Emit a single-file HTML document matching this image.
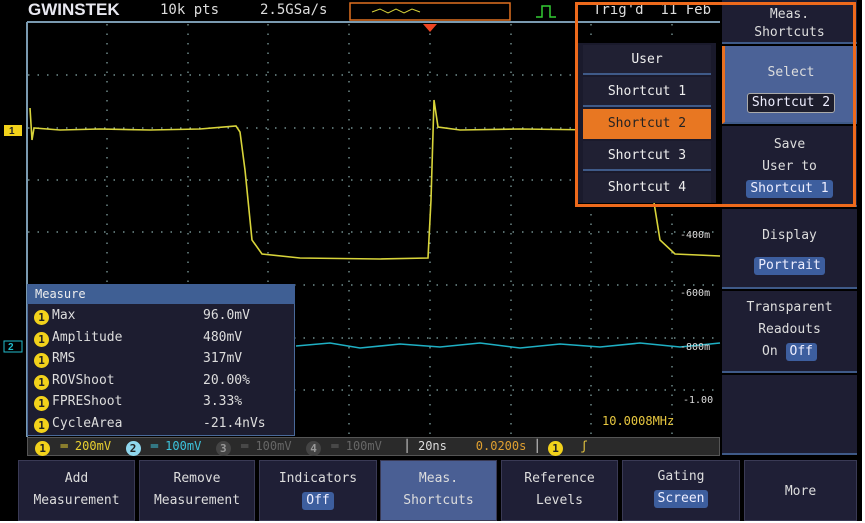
<!DOCTYPE html>
<html><head><meta charset="utf-8"><style>
*{margin:0;padding:0;box-sizing:border-box}
body{width:865px;height:523px;background:#fff;overflow:hidden;position:relative;font-family:"DejaVu Sans Mono","Liberation Mono",monospace;color:#e6e6ea}
.a{position:absolute}
.scr{left:0;top:0;width:862px;height:521px;background:#000}
.btn{position:absolute;background:#1f1f36;border:1px solid #3a3a55;text-align:center;font-size:13px;line-height:22px;color:#ddd}
.pill{display:inline-block;background:#3d5e9e;color:#eef;padding:0 4px;line-height:18px;border-radius:3px}
.rp{position:absolute;left:722px;width:135px;background:#1e1e33;border-bottom:2px solid #3f5a88;text-align:center;font-size:13px;line-height:22px;color:#ddd}
.li{position:absolute;left:583px;width:128px;height:30px;text-align:center;font-size:13px;line-height:30px;color:#eee;background:#202033;border-bottom:2px solid #3f5a88}
.m{position:absolute;left:34px;font-size:13px;line-height:21.5px;color:#ddd}
.c{display:inline-block;width:15px;height:15px;border-radius:50%;background:#f2d21b;color:#222;font-size:11px;line-height:15px;text-align:center;font-weight:bold;vertical-align:-2px;margin-right:3px}
</style></head><body>
<div class="a scr"></div>
<svg class="a" style="left:0;top:0" width="865" height="523">
<g stroke="#8aa" stroke-width="1.2" stroke-dasharray="1.5 8">
<line x1="107" y1="24" x2="107" y2="436"/><line x1="188" y1="24" x2="188" y2="436"/><line x1="268" y1="24" x2="268" y2="436"/><line x1="349" y1="24" x2="349" y2="436"/><line x1="430" y1="24" x2="430" y2="436"/><line x1="511" y1="24" x2="511" y2="436"/><line x1="591" y1="24" x2="591" y2="436"/><line x1="672" y1="24" x2="672" y2="436"/>
<line x1="28" y1="75" x2="720" y2="75"/><line x1="28" y1="128" x2="720" y2="128"/><line x1="28" y1="180" x2="720" y2="180"/><line x1="28" y1="232" x2="720" y2="232"/><line x1="28" y1="285" x2="720" y2="285"/><line x1="28" y1="338" x2="720" y2="338"/><line x1="28" y1="390" x2="720" y2="390"/>
</g>
<line x1="27" y1="22" x2="720" y2="22" stroke="#7a9ab0" stroke-width="2"/>
<line x1="27" y1="22" x2="27" y2="437" stroke="#7a9ab0" stroke-width="2"/>
<polyline fill="none" stroke="#d8d43a" stroke-width="1.6" points="30,108 32,140 34,128 60,130 100,129 150,130 200,129 236,126 240,132 245,170 252,240 262,254 300,258 380,259 428,258 431,200 434,100 438,127 460,130 520,129 600,130 648,129 652,190 660,240 675,254 720,256"/>
<polyline fill="none" stroke="#1fb0c4" stroke-width="1.6" points="296,346 330,343 360,348 400,344 440,347 480,343 520,348 560,344 600,347 640,343 680,347 720,343"/>
<polygon points="423,24 437,24 430,32" fill="#ee4422"/>
<rect x="4" y="125" width="18" height="11" fill="#f2d21b"/><text x="9" y="134" font-size="10" font-weight="bold" fill="#222" font-family="Liberation Sans">1</text>
<rect x="4" y="341" width="18" height="11" fill="none" stroke="#2bc" /><text x="8" y="350" font-size="10" font-weight="bold" fill="#2bc" font-family="Liberation Sans">2</text>
<rect x="350" y="3" width="160" height="17" fill="none" stroke="#e07020" stroke-width="1.5"/>
<polyline fill="none" stroke="#d8d43a" points="372,12 380,9 388,13 396,9 404,13 412,9 420,12"/>
<path d="M536 17 H542 V6 H550 V17 H556" fill="none" stroke="#3c3" stroke-width="1.5"/>
</svg>
<div class="a" style="left:28px;top:0;font:bold 17px 'Liberation Sans',sans-serif;color:#e8e8f0;letter-spacing:0px">GWINSTEK</div>
<div class="a" style="left:160px;top:2px;font-size:14px;color:#ddd">10k pts</div>
<div class="a" style="left:260px;top:2px;font-size:14px;color:#ddd">2.5GSa/s</div>
<div class="a" style="left:593px;top:2px;font-size:14px;color:#ddd">Trig'd &nbsp;11 Feb</div>
<div class="a" style="left:680px;top:230px;font-size:10px;color:#ddd">-400m</div>
<div class="a" style="left:680px;top:288px;font-size:10px;color:#ddd">-600m</div>
<div class="a" style="left:680px;top:342px;font-size:10px;color:#ddd">-800m</div>
<div class="a" style="left:683px;top:395px;font-size:10px;color:#ddd">-1.00</div>
<div class="a" style="left:602px;top:414px;font-size:12px;color:#e8c840">10.0008MHz</div>
<!-- measure -->
<div class="a" style="left:27px;top:284px;width:268px;height:152px;background:#1d1d30;border:1px solid #4a6a9a"></div>
<div class="a" style="left:27px;top:284px;width:268px;height:20px;background:#3f5f94;font-size:12px;line-height:20px;padding-left:8px;color:#eee">Measure</div>
<div class="m" style="top:305px"><span class="c">1</span>Max<br><span class="c">1</span>Amplitude<br><span class="c">1</span>RMS<br><span class="c">1</span>ROVShoot<br><span class="c">1</span>FPREShoot<br><span class="c">1</span>CycleArea</div>
<div class="m" style="left:203px;top:305px">96.0mV<br>480mV<br>317mV<br>20.00%<br>3.33%<br>-21.4nVs</div>
<!-- status bar -->
<div class="a" style="left:27px;top:437px;width:693px;height:19px;background:#2a2a2a;border:1px solid #555;font-size:12px;line-height:17px;white-space:pre;color:#ddd"> <span class="c">1</span> <span style="color:#e8d030">═ 200mV</span>  <span class="c" style="background:#8fd8ee">2</span> <span style="color:#3cc4dc">═ 100mV</span>  <span class="c" style="background:#444;color:#999">3</span> <span style="color:#666">═ 100mV</span>  <span class="c" style="background:#444;color:#999">4</span> <span style="color:#666">═ 100mV</span>   │ 20ns    <span style="color:#e0a030">0.0200s</span> │ <span class="c">1</span>  <span style="color:#e8c840">ʃ</span></div>
<!-- bottom buttons -->
<div class="btn" style="left:18px;top:460px;width:117px;height:61px;padding-top:7px">Add<br>Measurement</div>
<div class="btn" style="left:139px;top:460px;width:116px;height:61px;padding-top:7px">Remove<br>Measurement</div>
<div class="btn" style="left:259px;top:460px;width:118px;height:61px;padding-top:7px">Indicators<br><span class="pill">Off</span></div>
<div class="btn" style="left:380px;top:460px;width:117px;height:61px;padding-top:7px;background:#4a5f94">Meas.<br>Shortcuts</div>
<div class="btn" style="left:501px;top:460px;width:117px;height:61px;padding-top:7px">Reference<br>Levels</div>
<div class="btn" style="left:622px;top:460px;width:118px;height:61px;padding-top:5px">Gating<br><span class="pill">Screen</span></div>
<div class="btn" style="left:744px;top:460px;width:113px;height:61px;line-height:61px">More</div>
<!-- right panel -->
<div class="rp" style="top:0;height:44px;padding-top:0;line-height:18px;padding-top:6px">Meas.<br>Shortcuts</div>
<div class="rp" style="top:46px;height:78px;background:#4b6297;border-left:3px solid #e87020;padding-top:12px;line-height:30px">Select<br><span class="pill" style="background:#1d1d2c;border:1px solid #aaa">Shortcut 2</span></div>
<div class="rp" style="top:126px;height:81px;padding-top:8px">Save<br>User to<br><span class="pill">Shortcut 1</span></div>
<div class="rp" style="top:209px;height:80px;padding-top:12px;line-height:30px">Display<br><span class="pill">Portrait</span></div>
<div class="rp" style="top:291px;height:82px;padding-top:6px">Transparent<br>Readouts<br>On <span class="pill">Off</span></div>
<div class="rp" style="top:375px;height:80px"></div>
<!-- popup list -->
<div class="a" style="left:578px;top:43px;width:138px;height:160px;background:#1a1a2c"></div>
<div class="li" style="top:45px">User</div>
<div class="li" style="top:77px">Shortcut 1</div>
<div class="li" style="top:109px;background:#e87722;color:#222;border-bottom:2px solid #e87722">Shortcut 2</div>
<div class="li" style="top:141px">Shortcut 3</div>
<div class="li" style="top:173px;border-bottom:none">Shortcut 4</div>
<div class="a" style="left:575px;top:2px;width:281px;height:205px;border:3px solid #ee6a1c"></div>
</body></html>
